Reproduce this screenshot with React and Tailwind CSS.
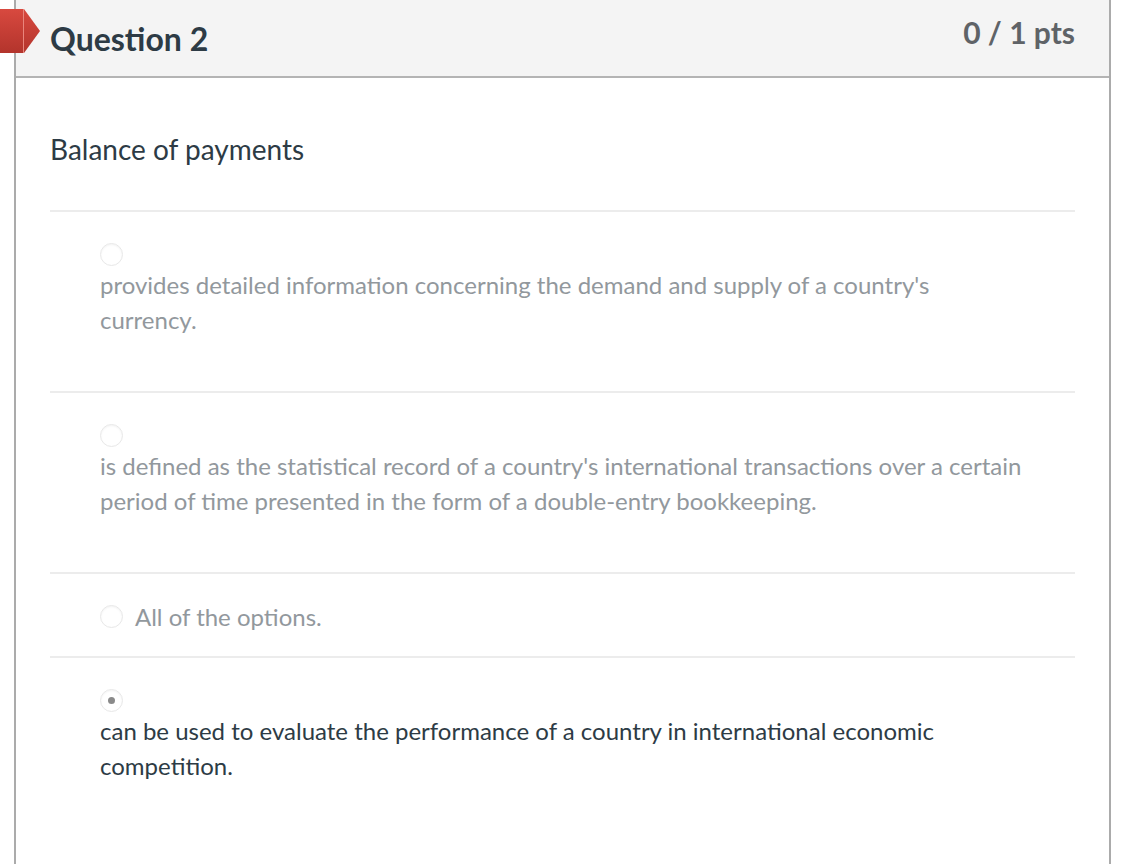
import React from "react";

function Radio({ selected }) {
  return (
    <span className="flex h-[23px] w-[23px] shrink-0 items-center justify-center rounded-full border border-[#e8e8e8] bg-white shadow-[inset_0_1px_2px_rgba(0,0,0,0.05)]">
      {selected && <span className="h-[7px] w-[7px] rounded-full bg-[#8a8a8a]" />}
    </span>
  );
}

function Sep() {
  return <div className="h-[2px] bg-[#ececec]" />;
}

export default function App() {
  const font = { fontFamily: "Lato, 'Open Sans', sans-serif" };
  return (
    <div className="relative min-h-[864px] bg-white" style={font}>
      <svg className="absolute left-0 top-[9px]" width="41" height="44" viewBox="0 0 41 44">
        <defs>
          <linearGradient id="fg" x1="0" y1="0" x2="0" y2="1">
            <stop offset="0" stopColor="#d8493f" />
            <stop offset="1" stopColor="#b3342c" />
          </linearGradient>
        </defs>
        <rect x="0" y="0" width="24" height="44" fill="url(#fg)" />
        <polygon points="24,0 40,22 24,44" fill="url(#fg)" />
        <rect x="23" y="0" width="1" height="44" fill="#e9857c" />
      </svg>
      <div className="ml-[14px] min-h-[864px] w-[1097px] border-x-2 border-[#ababab]">
        <div className="flex h-[78px] items-start justify-between border-b-2 border-[#b4b4b4] bg-[#f4f4f4] pl-[34px] pr-[34px]">
          <h2 className="mt-[20px] text-[32px] font-bold leading-[38px] text-[#2d3b45]">Question 2</h2>
          <div className="mt-[13px] text-[30px] font-bold leading-[38px] text-[#5f6367]">0 / 1 pts</div>
        </div>
        <div className="px-[34px]">
          <div className="pt-[55px] text-[28px] leading-[32px] text-[#2d3b45]">Balance of payments</div>
          <div className="mt-[45px]">
            <Sep />
            <div className="pl-[50px] pt-[31px] pb-[54px]">
              <Radio />
              <div className="mt-[1px] text-[24px] leading-[35px] text-[#92989d]">
                provides detailed information concerning the demand and supply of a country's
                <br />
                currency.
              </div>
            </div>
            <Sep />
            <div className="pl-[50px] pt-[31px] pb-[54px]">
              <Radio />
              <div className="mt-[1px] text-[24px] leading-[35px] text-[#92989d]">
                is defined as the statistical record of a country's international transactions over a certain
                <br />
                period of time presented in the form of a double-entry bookkeeping.
              </div>
            </div>
            <Sep />
            <div className="flex items-center gap-[12px] pl-[50px] pt-[31px] pb-[28px]">
              <Radio />
              <span className="text-[24px] leading-[23px] text-[#92989d]">All of the options.</span>
            </div>
            <Sep />
            <div className="pl-[50px] pt-[31px] pb-[54px]">
              <Radio selected />
              <div className="mt-[1px] text-[24px] leading-[35px] text-[#2d3b45]">
                can be used to evaluate the performance of a country in international economic
                <br />
                competition.
              </div>
            </div>
          </div>
        </div>
      </div>
    </div>
  );
}
